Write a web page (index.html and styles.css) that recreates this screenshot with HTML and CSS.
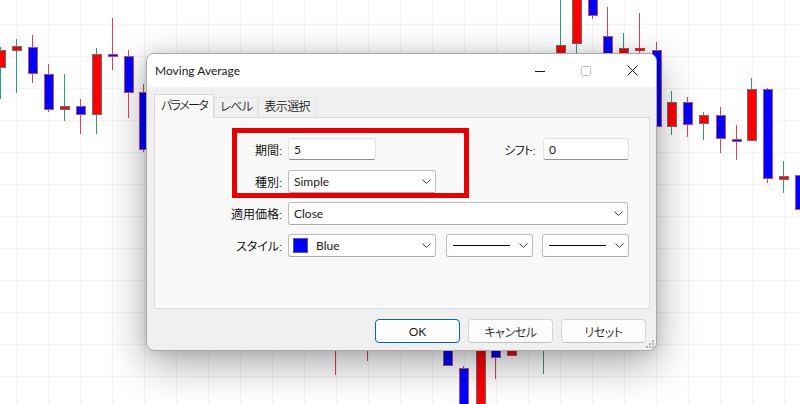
FILE: index.html
```html
<!DOCTYPE html>
<html lang="ja">
<head>
<meta charset="utf-8">
<title>Moving Average</title>
<link rel="stylesheet" href="styles.css">
</head>
<body>
<div class="chart">
  <div class="candles">
    <div class="c up" style="left:-4px;top:47px;height:52px"><i style="top:3px;height:18px"></i></div>
    <div class="c up" style="left:12px;top:39px;height:54px"><i style="top:7px;height:5px"></i></div>
    <div class="c dn" style="left:28px;top:35px;height:48px"><i style="top:12px;height:27px"></i></div>
    <div class="c dn" style="left:44px;top:64px;height:48px"><i style="top:10px;height:36px"></i></div>
    <div class="c up" style="left:60px;top:74px;height:47px"><i style="top:32px;height:4px"></i></div>
    <div class="c dn" style="left:76px;top:99px;height:35px"><i style="top:7px;height:9px"></i></div>
    <div class="c up" style="left:92px;top:48px;height:86px"><i style="top:6px;height:61px"></i></div>
    <div class="c dn" style="left:108px;top:18px;height:52px"><i style="top:36px;height:3px"></i></div>
    <div class="c dn" style="left:124px;top:50px;height:68px"><i style="top:6px;height:37px"></i></div>
    <div class="c dn" style="left:139px;top:84px;height:68px"><i style="top:8px;height:58px"></i></div>

    <div class="c up" style="left:556px;top:0px;height:70px"><i style="top:45px;height:25px"></i></div>
    <div class="c up" style="left:572px;top:-10px;height:80px"><i style="top:0px;height:54px"></i></div>
    <div class="c dn" style="left:588px;top:-5px;height:24px"><i style="top:0px;height:21px"></i></div>
    <div class="c dn" style="left:603px;top:7px;height:63px"><i style="top:29px;height:34px"></i></div>
    <div class="c up" style="left:619px;top:33px;height:37px"><i style="top:15px;height:12px"></i></div>
    <div class="c dj" style="left:635px;top:13px;height:47px"><i style="top:35px;height:3px"></i></div>
    <div class="c dn" style="left:652px;top:42px;height:88px"><i style="top:8px;height:77px"></i></div>

    <div class="c up" style="left:667px;top:91px;height:44px"><i style="top:11px;height:25px"></i></div>
    <div class="c dn" style="left:683px;top:97px;height:40px"><i style="top:5px;height:23px"></i></div>
    <div class="c up" style="left:699px;top:112px;height:28px"><i style="top:3px;height:9px"></i></div>
    <div class="c dn" style="left:716px;top:107px;height:46px"><i style="top:8px;height:24px"></i></div>
    <div class="c dn" style="left:732px;top:125px;height:35px"><i style="top:14px;height:3px"></i></div>
    <div class="c up" style="left:747px;top:78px;height:63px"><i style="top:11px;height:52px"></i></div>
    <div class="c dn" style="left:763px;top:88px;height:95px"><i style="top:1px;height:90px"></i></div>
    <div class="c up" style="left:779px;top:161px;height:32px"><i style="top:15px;height:4px"></i></div>
    <div class="c dn" style="left:795px;top:175px;height:35px"><i style="top:0px;height:35px"></i></div>

    <div class="c dn" style="left:331px;top:300px;height:75px"><i style="top:0px;height:40px"></i></div>
    <div class="c dn" style="left:363px;top:300px;height:61px"><i style="top:0px;height:40px"></i></div>
    <div class="c dn" style="left:443px;top:320px;height:46px"><i style="top:10px;height:36px"></i></div>
    <div class="c dn" style="left:459px;top:366px;height:44px"><i style="top:2px;height:42px"></i></div>
    <div class="c up" style="left:476px;top:320px;height:90px"><i style="top:10px;height:80px"></i></div>
    <div class="c dn" style="left:491px;top:320px;height:59px"><i style="top:10px;height:28px"></i></div>
    <div class="c up" style="left:507px;top:320px;height:36px"><i style="top:10px;height:26px"></i></div>
    <div class="c up" style="left:539px;top:300px;height:74px"><i style="top:0px;height:40px"></i></div>
  </div>

  <div class="dialog">
    <div class="titlebar">
      <span class="title">Moving Average</span>
      <div class="wctl">
        <span class="wbtn"><svg width="10" height="10" viewBox="0 0 10 10"><path d="M0 5.5H10" stroke="#1a1a1a" stroke-width="1"/></svg></span>
        <span class="wbtn"><svg width="10" height="10" viewBox="0 0 10 10"><rect x="0.5" y="0.5" width="9" height="9" rx="1" fill="none" stroke="#c2c2c2"/></svg></span>
        <span class="wbtn"><svg width="11" height="11" viewBox="0 0 11 11"><path d="M0.5 0.5L10.5 10.5M10.5 0.5L0.5 10.5" stroke="#1a1a1a" stroke-width="1"/></svg></span>
      </div>
    </div>
    <div class="dbody">
      <div class="tabs">
        <span class="tab active">パラメータ</span>
        <span class="tab">レベル</span>
        <span class="tab">表示選択</span>
      </div>
      <div class="panel">
        <div class="row">
          <span class="lbl">期間:</span>
          <span class="field w88">5</span>
          <span class="lbl2">シフト:</span>
          <span class="field w86">0</span>
        </div>
        <div class="row">
          <span class="lbl">種別:</span>
          <span class="field sel w148">Simple<svg class="chev" width="9" height="5" viewBox="0 0 9 5"><path d="M0.5 0.5L4.5 4.5L8.5 0.5" fill="none" stroke="#444"/></svg></span>
        </div>
        <div class="row">
          <span class="lbl">適用価格:</span>
          <span class="field sel w340">Close<svg class="chev" width="9" height="5" viewBox="0 0 9 5"><path d="M0.5 0.5L4.5 4.5L8.5 0.5" fill="none" stroke="#444"/></svg></span>
        </div>
        <div class="row">
          <span class="lbl">スタイル:</span>
          <span class="field sel w148"><span class="swatch"></span>Blue<svg class="chev" width="9" height="5" viewBox="0 0 9 5"><path d="M0.5 0.5L4.5 4.5L8.5 0.5" fill="none" stroke="#444"/></svg></span>
          <span class="field sel w87 g10"><span class="ln"></span><svg class="chev" width="9" height="5" viewBox="0 0 9 5"><path d="M0.5 0.5L4.5 4.5L8.5 0.5" fill="none" stroke="#444"/></svg></span>
          <span class="field sel w87 g9"><span class="ln"></span><svg class="chev" width="9" height="5" viewBox="0 0 9 5"><path d="M0.5 0.5L4.5 4.5L8.5 0.5" fill="none" stroke="#444"/></svg></span>
        </div>
      </div>
      <div class="buttons">
        <span class="btn def">OK</span>
        <span class="btn">キャンセル</span>
        <span class="btn">リセット</span>
      </div>
    </div>
    <svg class="grip" width="8" height="8" viewBox="0 0 8 8"><g fill="#b5b5b5"><rect x="6" y="0" width="2" height="2"/><rect x="3" y="3" width="2" height="2"/><rect x="6" y="3" width="2" height="2"/><rect x="0" y="6" width="2" height="2"/><rect x="3" y="6" width="2" height="2"/><rect x="6" y="6" width="2" height="2"/></g></svg>
  </div>

  <div class="highlight"></div>
</div>
</body>
</html>
```

FILE: styles.css
```css
* { box-sizing: border-box; }
html, body { margin: 0; padding: 0; }
body {
  width: 800px;
  height: 404px;
  overflow: hidden;
  background: #fff;
  font-family: Lato, "Noto Sans CJK JP", sans-serif;
  font-size: 12px;
  font-weight: 400;
  color: #000;
  font-feature-settings: "palt";
}
.chart {
  position: relative;
  width: 800px;
  height: 404px;
  overflow: hidden;
  background-color: #fff;
  background-image:
    repeating-linear-gradient(to right, transparent 0 16px, rgba(0,0,0,0.045) 16px 17px, transparent 17px 32px),
    repeating-linear-gradient(to bottom, transparent 0 24px, rgba(0,0,0,0.045) 24px 25px, transparent 25px 32px);
}
.candles { position: absolute; inset: 0; }
.c { position: absolute; width: 10px; }
.c::before {
  content: "";
  position: absolute;
  left: 4px;
  top: 0;
  bottom: 0;
  width: 1px;
  background: var(--wick);
}
.c i {
  position: absolute;
  left: 0;
  width: 10px;
  border: 1px solid var(--edge);
  background: var(--fill);
}
.c.up { --wick: #2f9a7c; --edge: #7e6872; --fill: #ff0000; }
.c.dn { --wick: #d2465e; --edge: #b2507e; --fill: #0000ff; }
.c.dj { --wick: #d2465e; --edge: #d23a4a; --fill: #ff0000; }

.dialog {
  position: absolute;
  left: 146px;
  top: 53px;
  width: 511px;
  height: 298px;
  border: 1px solid #a9a9a9;
  border-radius: 8px;
  background: #f0f0f0;
  box-shadow: 0 12px 42px rgba(0,0,0,0.36), 0 0 12px rgba(0,0,0,0.1);
  display: flex;
  flex-direction: column;
  overflow: hidden;
}
.titlebar {
  flex: none;
  height: 33px;
  background: #fff;
  display: flex;
  align-items: center;
}
.title {
  padding-left: 8px;
  font-size: 12px;
  color: #1a1a1a;
}
.wctl {
  margin-left: auto;
  margin-right: 1px;
  display: flex;
  height: 100%;
}
.wbtn {
  width: 46px;
  height: 100%;
  display: flex;
  align-items: center;
  justify-content: center;
}
.wbtn svg { display: block; }

.dbody {
  flex: 1;
  padding: 7px 6px 0 7px;
  display: flex;
  flex-direction: column;
}
.tabs {
  display: flex;
  align-items: flex-end;
  height: 23px;
}
.tab {
  height: 20px;
  padding: 0 5px;
  line-height: 18px;
  border: 1px solid #e6e6e6;
  border-bottom: none;
  color: #1a1a1a;
  letter-spacing: -0.6px;
  font-weight: 350;
}
.tab.active {
  height: 24px;
  line-height: 21px;
  padding: 0 6px;
  background: #f9f9f9;
  border-color: #d6d6d6;
  margin-bottom: -1px;
  position: relative;
  z-index: 1;
  letter-spacing: -1.6px;
}
.panel {
  flex: none;
  height: 192px;
  border: 1px solid #dcdcdc;
  background: #f9f9f9;
  padding: 20px 20px 0 0;
}
.row {
  display: flex;
  align-items: center;
  height: 22px;
  margin-bottom: 10px;
}
.lbl, .lbl2, .btn { font-weight: 350; }
.lbl {
  width: 133px;
  padding-right: 6px;
  text-align: right;
}
.lbl2 {
  margin-left: auto;
  padding-right: 8px;
  letter-spacing: -0.6px;
}
.field {
  height: 22px;
  background: #fff;
  border: 1px solid #e3e3e3;
  border-bottom-color: #8f8f8f;
  border-radius: 3px;
  padding-left: 5px;
  display: flex;
  align-items: center;
  white-space: nowrap;
  font-size: 12px;
  color: #1a1a1a;
}
.field.sel {
  height: 23px;
  border-color: #bdbdbd;
  border-bottom-color: #a9a9a9;
  padding-left: 5px;
}
.w86 { width: 86px; }
.w87 { width: 87px; }
.w88 { width: 88px; }
.w148 { width: 148px; }
.w340 { width: 340px; }
.g10 { margin-left: 10px; }
.g9 { margin-left: 9px; }
.chev { margin-left: auto; margin-right: 4px; display: block; }
.swatch {
  width: 15px;
  height: 15px;
  margin-left: -1px;
  background: #0000ff;
  border: 1px solid #5a5a8a;
  margin-right: 8px;
}
.ln {
  width: 57px;
  height: 1px;
  background: #000;
  margin-left: 1px;
}
.buttons {
  display: flex;
  justify-content: flex-end;
  gap: 8px;
  margin-top: 10px;
  padding-right: 4px;
}
.btn {
  width: 85px;
  height: 24px;
  border: 1px solid #d6d6d6;
  border-bottom-color: #c2c2c2;
  border-radius: 4px;
  background: #fdfdfd;
  display: flex;
  align-items: center;
  justify-content: center;
  color: #1a1a1a;
  letter-spacing: -0.4px;
}
.btn.def {
  border-color: #0067c0;
  font-weight: 400;
  letter-spacing: 0;
}
.grip {
  position: absolute;
  right: 2px;
  bottom: 2px;
}
.highlight {
  position: absolute;
  left: 232px;
  top: 128px;
  width: 237px;
  height: 70px;
  border: 5px solid #e60000;
}
```
